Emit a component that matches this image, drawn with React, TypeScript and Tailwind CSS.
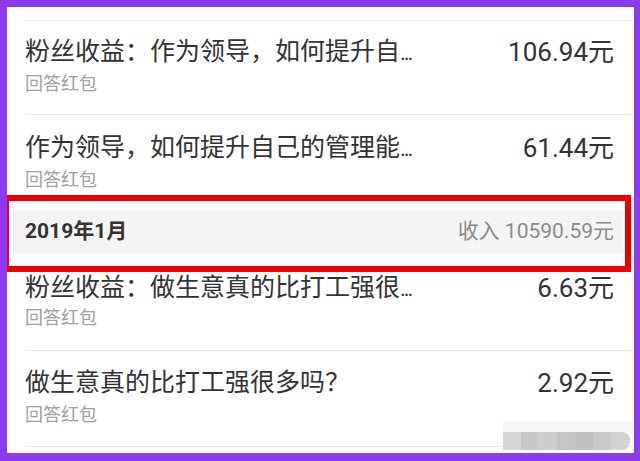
const rows1 = [
  { title: "粉丝收益：作为领导，如何提升自", amount: "106.94元" },
  { title: "作为领导，如何提升自己的管理能", amount: "61.44元" },
];

const rows2 = [
  { title: "粉丝收益：做生意真的比打工强很", amount: "6.63元" },
  { title: "做生意真的比打工强很多吗？", amount: "2.92元", full: true },
];

const font = { fontFamily: 'Roboto, "Noto Sans CJK SC", sans-serif' };

function Row({ title, amount, full, pad }: { title: string; amount: string; full?: boolean; pad: string }) {
  return (
    <div className={`ml-[18px] border-b border-[#ececec] pr-[20px] ${pad}`}>
      <div className="flex h-[32px] items-center justify-between">
        <span className="text-[25px] leading-[32px] whitespace-nowrap text-[#333333]">
          {title}
          {!full && <span className="text-[22px] tracking-[-2px]">...</span>}
        </span>
        <span className="text-[26px] leading-[32px] whitespace-nowrap text-[#333333]">{amount}</span>
      </div>
      <div className="mt-[2px] text-[18px] leading-[28px] text-[#a0a0a0]">回答红包</div>
    </div>
  );
}

export default function App() {
  return (
    <div
      className="relative h-[461px] w-[640px] overflow-hidden border-t-[7px] border-r-[6px] border-b-[8px] border-l-[7px] border-[#8c3cee] bg-white"
      style={font}
    >
      <div className="ml-[18px] h-[14px] border-b border-[#ececec]" />

      <Row {...rows1[0]} pad="pt-[15px] pb-[16px]" />
      <div className="ml-[18px] pr-[20px] pt-[17px] pb-[16px]">
        <div className="flex h-[32px] items-center justify-between">
          <span className="text-[25px] leading-[32px] whitespace-nowrap text-[#333333]">
            {rows1[1].title}
            <span className="text-[22px] tracking-[-2px]">...</span>
          </span>
          <span className="text-[26px] leading-[32px] whitespace-nowrap text-[#333333]">{rows1[1].amount}</span>
        </div>
        <div className="mt-[2px] text-[18px] leading-[28px] text-[#a0a0a0]">回答红包</div>
      </div>

      <div className="ml-[6px] mr-[11px] flex h-[44px] items-center justify-between bg-[#f4f4f4] pl-[12px] pr-[9px]">
        <span className="text-[21px] font-bold text-[#333333]">2019年1月</span>
        <span className="text-[21px] text-[#8a8a8a]">收入 10590.59元</span>
      </div>

      <div className="ml-[18px] border-b border-[#ececec] pr-[20px] pt-[18px] pb-[18px]">
        <div className="flex h-[32px] items-center justify-between">
          <span className="text-[25px] leading-[32px] whitespace-nowrap text-[#333333]">
            {rows2[0].title}
            <span className="text-[22px] tracking-[-2px]">...</span>
          </span>
          <span className="text-[26px] leading-[32px] whitespace-nowrap text-[#333333]">{rows2[0].amount}</span>
        </div>
        <div className="text-[18px] leading-[28px] text-[#a0a0a0]">回答红包</div>
      </div>
      <Row {...rows2[1]} pad="pt-[16px] pb-[17px]" />

      {/* red annotation box */}
      <div className="pointer-events-none absolute left-[-4px] top-[188px] h-[77px] w-[628px] border-[6px] border-[#ee0000]" />

      {/* blurred watermark */}
      <div className="absolute left-[496px] top-[414px] h-[11px] w-[130px] bg-[#f6f6f6]" />
      <div className="absolute left-[496px] top-[425px] flex h-[18px] w-[127px] overflow-hidden rounded-r-[8px]">
        <div className="w-[18px] bg-[#d6d6d6]" />
        <div className="w-[18px] bg-[#c8c8c8]" />
        <div className="w-[18px] bg-[#cdcdcd]" />
        <div className="w-[18px] bg-[#c4c4c4]" />
        <div className="w-[18px] bg-[#c1c1c1]" />
        <div className="w-[18px] bg-[#c9c9c9]" />
        <div className="w-[19px] bg-[#d3d3d3]" />
      </div>
    </div>
  );
}
